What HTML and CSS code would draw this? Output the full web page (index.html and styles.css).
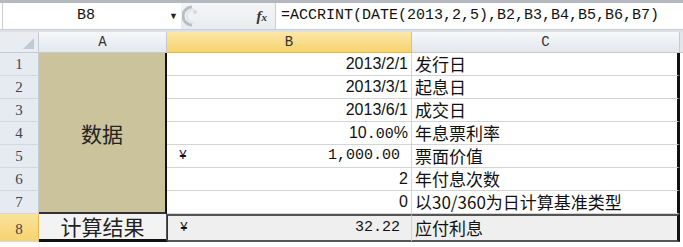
FILE: index.html
```html
<!DOCTYPE html>
<html lang="zh-CN">
<head>
  <meta charset="UTF-8" />
  <title>ACCRINT</title>
  <link rel="stylesheet" href="styles.css">
</head>
<body>
  <div class="topbar"></div>
  <div class="formula-bar">
    <div class="name-box">B8</div>
    <div class="drop">&#9660;</div>
    <div class="tools">
      <svg class="knob" width="18" height="22" viewBox="0 0 18 22">
        <path d="M10 2 A9 9 0 0 0 10 20" fill="none" stroke="#b9bec4" stroke-width="3"/>
        <path d="M12 4 A7 7 0 0 0 12 18" fill="none" stroke="#e2e5e8" stroke-width="2"/>
        <circle cx="13" cy="7" r="2" fill="#d4d8dc"/>
      </svg>
      <span class="fx"><i>f</i><i class="x">x</i></span>
    </div>
    <div class="formula">=ACCRINT(DATE(2013,2,5),B2,B3,B4,B5,B6,B7)</div>
  </div>
  <div class="gap"></div>

  <div class="sheet">
    <div class="corner"><span class="tri"></span></div>
    <div class="col-head">A</div>
    <div class="col-head active">B</div>
    <div class="col-head">C</div>
    <div class="edge-head"></div>

    <div class="row-head">1</div>
    <div class="merged">数据</div>
    <div class="cell num">2013/2/1</div>
    <div class="cell text">发行日</div>
    <div class="edge"></div>

    <div class="row-head">2</div>
    <div class="cell num">2013/3/1</div>
    <div class="cell text">起息日</div>
    <div class="edge"></div>

    <div class="row-head">3</div>
    <div class="cell num">2013/6/1</div>
    <div class="cell text">成交日</div>
    <div class="edge"></div>

    <div class="row-head">4</div>
    <div class="cell num">10<span class="mono">.00</span>%</div>
    <div class="cell text">年息票利率</div>
    <div class="edge"></div>

    <div class="row-head">5</div>
    <div class="cell num money"><span class="yen">¥</span><span class="mono">1,000.00</span></div>
    <div class="cell text">票面价值</div>
    <div class="edge"></div>

    <div class="row-head">6</div>
    <div class="cell num">2</div>
    <div class="cell text">年付息次数</div>
    <div class="edge"></div>

    <div class="row-head">7</div>
    <div class="cell num">0</div>
    <div class="cell text">以30/360为日计算基准类型</div>
    <div class="edge"></div>

    <div class="row-head active">8</div>
    <div class="result-label">计算结果</div>
    <div class="cell num money result"><span class="yen">¥</span><span class="mono">32.22</span></div>
    <div class="cell text result">应付利息</div>
    <div class="edge"></div>
  </div>
</body>
</html>
```

FILE: styles.css
```css
body {
  margin: 0;
  width: 683px;
  height: 247px;
  overflow: hidden;
  background: #fff;
  font-family: "Liberation Sans", "Noto Sans CJK SC", sans-serif;
}
.topbar {
  height: 3px;
  background: #b4b9bf;
}
.formula-bar {
  display: flex;
  height: 26px;
  background: #fff;
  border-bottom: 1px solid #c9ced4;
}
.name-box {
  width: 166px;
  margin-left: 2px;
  border-left: 1px solid #c9ced4;
  text-align: center;
  line-height: 26px;
  font-family: "Liberation Mono", monospace;
  font-size: 15px;
  color: #111;
}
.drop {
  width: 12px;
  font-size: 9px;
  line-height: 26px;
  color: #222;
}
.tools {
  width: 86px;
  display: flex;
  align-items: center;
  justify-content: space-between;
  background: linear-gradient(#f4f5f7, #e9ecef);
  padding-right: 8px;
}
.knob {
  margin-left: 1px;
}
.fx {
  font-family: "Liberation Serif", serif;
  font-size: 15px;
  font-weight: bold;
  color: #333;
}
.fx .x {
  font-size: 11px;
}
.formula {
  flex: 1;
  border-left: 1px solid #c9ced4;
  padding-left: 5px;
  line-height: 26px;
  font-family: "Liberation Mono", monospace;
  font-size: 15px;
  color: #111;
  white-space: nowrap;
}
.gap {
  height: 2px;
  background: #dde1e6;
}
.sheet {
  display: grid;
  grid-template-columns: 39px 128px 245px 268px 3px;
  grid-template-rows: 21px repeat(7, 23px) 28px;
}
.corner {
  position: relative;
  background: #e9edf2;
  border-right: 1px solid #c5cbd3;
  border-bottom: 1px solid #c5cbd3;
}
.tri {
  position: absolute;
  right: 4px;
  bottom: 3px;
  width: 0;
  height: 0;
  border-left: 11px solid transparent;
  border-bottom: 11px solid #c4c9cf;
}
.col-head {
  background: linear-gradient(#f6f8fa, #e3e7ec);
  border-right: 1px solid #c5cbd3;
  border-bottom: 1px solid #c5cbd3;
  text-align: center;
  line-height: 21px;
  font-family: "Liberation Mono", monospace;
  font-size: 14px;
  color: #333;
}
.col-head.active {
  background: linear-gradient(#fbe7a8, #f7d36f);
  border-bottom: 1px solid #f0b73c;
  border-right: 1px solid #e6c25e;
}
.edge-head {
  background: #e3e7ec;
  border-bottom: 1px solid #c5cbd3;
}
.row-head {
  background: #e6ebf2;
  border-right: 1px solid #c5cbd3;
  border-bottom: 1px solid #d2d8df;
  text-align: center;
  line-height: 23px;
  font-family: "Liberation Serif", serif;
  font-size: 15px;
  color: #3b4550;
}
.row-head.active {
  line-height: 30px;
  background: linear-gradient(#fbe29a, #f7d370);
  border-right: 1px solid #e6b84a;
}
.merged {
  grid-row: 2 / span 7;
  grid-column: 2;
  display: flex;
  align-items: center;
  justify-content: center;
  background: #cbc39c;
  border-right: 2px solid #111;
  border-bottom: 2px solid #333;
  font-family: "Noto Sans CJK SC", sans-serif;
  font-size: 21px;
  color: #222;
}
.cell {
  border-bottom: 1px solid #d4d4d4;
  border-right: 1px solid #d4d4d4;
  font-size: 16px;
  line-height: 22px;
  color: #111;
  white-space: nowrap;
}
.num {
  text-align: right;
  padding-right: 3px;
}
.text {
  padding-left: 3px;
  font-family: "Noto Sans CJK SC", sans-serif;
  font-size: 17px;
  border-right: 3px solid #111;
}
.mono {
  font-family: "Liberation Mono", monospace;
  font-size: 15px;
}
.money {
  display: flex;
  justify-content: space-between;
  padding-left: 12px;
  padding-right: 11px;
}
.yen {
  font-family: "Liberation Mono", monospace;
  font-size: 13px;
}
.edge {
  background: #fff;
}
.result-label {
  background: #f3f3f3;
  border-right: 1px solid #555;
  border-bottom: 3px solid #111;
  text-align: center;
  line-height: 25px;
  font-family: "Noto Sans CJK SC", sans-serif;
  font-size: 21px;
  color: #222;
}
.cell.result {
  background: #efefef;
  border-top: 2px solid #555;
  border-bottom: 2px solid #555;
  line-height: 24px;
}
.cell.num.result {
  border-left: 1px solid #333;
}
```
